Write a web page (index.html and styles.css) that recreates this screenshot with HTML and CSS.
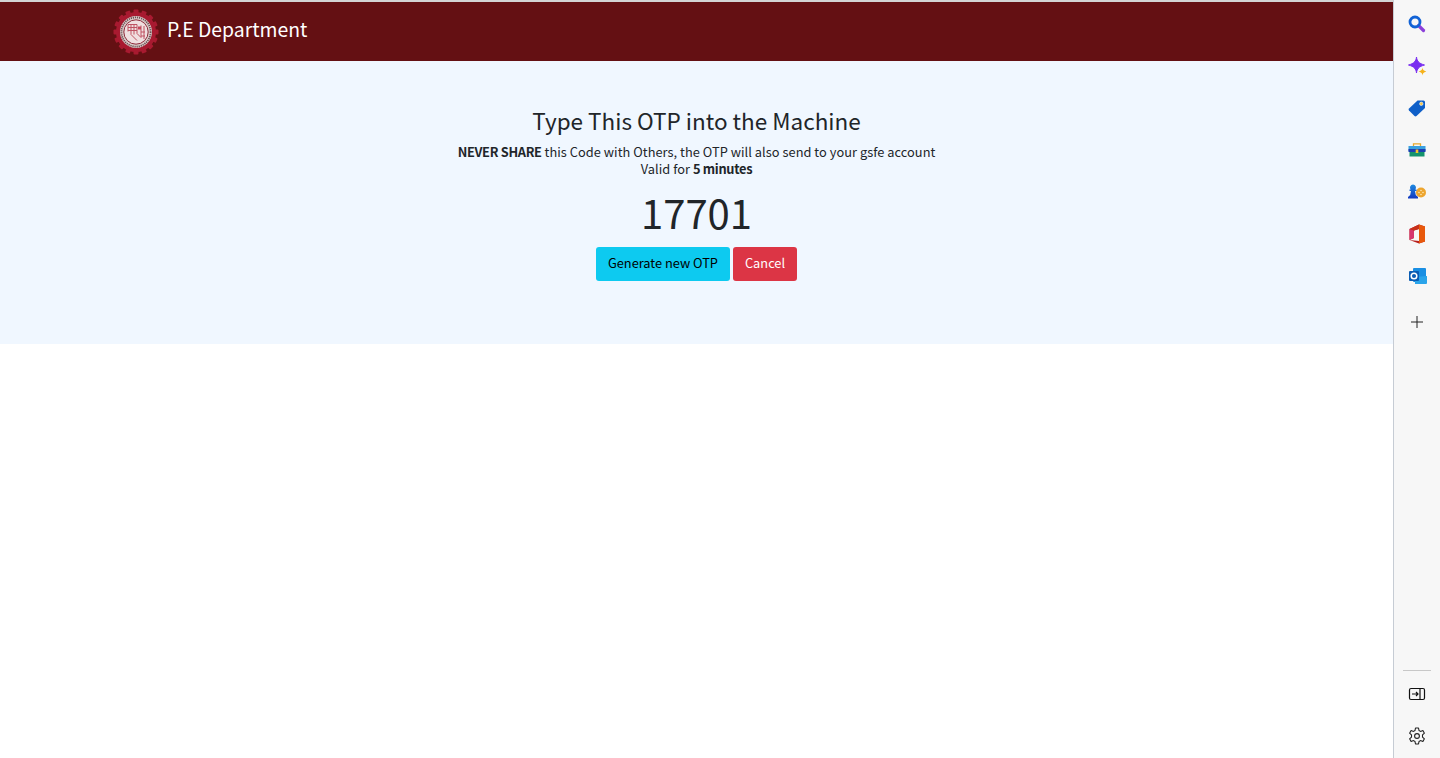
FILE: index.html
```html
<!DOCTYPE html>
<html lang="en">
<head>
<meta charset="utf-8">
<title>P.E Department</title>
<link rel="stylesheet" href="styles.css">
</head>
<body>
<div class="page">
  <main class="main">
    <header class="navbar">
      <svg class="logo" viewBox="0 0 46 46" aria-hidden="true">
        <g fill="#a81a30">
          <circle cx="23" cy="23" r="20"/>
          <rect x="20.500" y="0.500" width="5" height="45" rx="1"/>
          <rect x="20.500" y="0.500" width="5" height="45" rx="1" transform="rotate(22.500 23 23)"/>
          <rect x="20.500" y="0.500" width="5" height="45" rx="1" transform="rotate(45 23 23)"/>
          <rect x="20.500" y="0.500" width="5" height="45" rx="1" transform="rotate(67.500 23 23)"/>
          <rect x="20.500" y="0.500" width="5" height="45" rx="1" transform="rotate(90 23 23)"/>
          <rect x="20.500" y="0.500" width="5" height="45" rx="1" transform="rotate(112.500 23 23)"/>
          <rect x="20.500" y="0.500" width="5" height="45" rx="1" transform="rotate(135 23 23)"/>
          <rect x="20.500" y="0.500" width="5" height="45" rx="1" transform="rotate(157.500 23 23)"/>
        </g>
        <circle cx="23" cy="23" r="16" fill="#d9cdca"/>
        <circle cx="23" cy="23" r="14.600" fill="none" stroke="#6f5054" stroke-width="1.800" stroke-dasharray="1.200 .9"/>
        <circle cx="23" cy="23" r="12.200" fill="#f0dfe0" stroke="#8d2a3a" stroke-width="1"/>
        <path d="M15 15.500h9v9l4 4v-12M15 18.500h9M15 21.500h9M18 15.500v10l6 6M21 15.500v10M28 23h4M28 27h4M31 17v13M15 15.500v7" fill="none" stroke="#bf5363" stroke-width="1"/>
        <path d="M25 17.500h3v3h-3z" fill="#c4495c"/>
      </svg>
      <span class="brand">P.E Department</span>
    </header>
    <section class="hero">
      <h3 class="title">Type This OTP into the Machine</h3>
      <p class="note"><strong>NEVER SHARE</strong> this Code with Others, the OTP will also send to your gsfe account<br>Valid for <strong>5 minutes</strong></p>
      <div class="code">17701</div>
      <div class="actions">
        <button class="btn btn-info">Generate new OTP</button>
        <button class="btn btn-danger">Cancel</button>
      </div>
    </section>
  </main>
  <aside class="sidebar">
    <div class="side-top">
      <span class="side-item"><svg viewBox="0 0 20 20" width="20" height="20"><path d="M11.500 11.500l5 5" stroke="#8b3fd9" stroke-width="3.200" stroke-linecap="round"/><circle cx="8" cy="8" r="5" fill="none" stroke="#1263d6" stroke-width="2.800"/></svg></span>
      <span class="side-item"><svg viewBox="0 0 20 20" width="20" height="20"><path d="M9.500 1c.5 4.300 2.500 6.500 8 8-5.500 1.500-7.500 3.700-8 8-.5-4.300-2.500-6.500-8-8 5.500-1.500 7.500-3.700 8-8z" fill="#7a2ff0" stroke="#7a2ff0" stroke-width="1" stroke-linejoin="round"/><path d="M15.500 11.500c.3 2.200 1 3 3.800 4-2.800 1-3.500 1.800-3.800 4-.3-2.200-1-3-3.800-4 2.800-1 3.500-1.800 3.800-4z" fill="#f6b21b"/></svg></span>
      <span class="side-item"><svg viewBox="0 0 20 20" width="20" height="20"><path d="M10.500 2.500h6a1.500 1.500 0 0 1 1.500 1.500v6L9.500 18a1.500 1.500 0 0 1-2 0L2 12.500a1.500 1.500 0 0 1 0-2z" fill="#0f5fc8"/><circle cx="14.300" cy="5.800" r="1.700" fill="#f6c544" stroke="#fff" stroke-width=".6"/></svg></span>
      <span class="side-item"><svg viewBox="0 0 20 20" width="20" height="20"><path d="M6.500 6V3.800h7V6" fill="none" stroke="#e9a82c" stroke-width="1.300"/><rect x="1.500" y="6" width="17" height="5" fill="#3aa0de"/><rect x="1.500" y="9" width="17" height="3" fill="#1c3fb0"/><rect x="2.500" y="12" width="15" height="4.500" fill="#14936d"/><rect x="8.700" y="9.500" width="2.600" height="3.500" fill="#f6c22b"/></svg></span>
      <span class="side-item"><svg viewBox="0 0 20 20" width="20" height="20"><defs><linearGradient id="pawn" x1="0" y1="0" x2="0" y2="1"><stop offset="0" stop-color="#1f8be0"/><stop offset="1" stop-color="#1238c0"/></linearGradient></defs><circle cx="14" cy="10.500" r="5" fill="#eda52f"/><path d="M6 2.500a3 3 0 0 1 2.300 4.900H9.500v1.600H8l.8 4 2.200 2V16.500H1V15l2.200-2L4 9H2.500V7.400h1.200A3 3 0 0 1 6 2.500z" fill="url(#pawn)"/><g fill="#fbe6b4"><circle cx="14" cy="8.500" r=".8"/><circle cx="12" cy="10.500" r=".8"/><circle cx="16" cy="10.500" r=".8"/><circle cx="14" cy="12.500" r=".8"/></g></svg></span>
      <span class="side-item"><svg viewBox="0 0 20 20" width="20" height="20"><path d="M12 .5l6 2v15l-6 2-9.500-3.500 9.500 1V5L7 6.500V14l-4.500 2V5z" fill="#b8201f"/><path d="M2.500 5L7 6.500V14l-4.500 2z" fill="#d6366f"/><path d="M12 .5l6 2v15l-6 2z" fill="#e8590c"/><path d="M12 .5L2.500 5 7 6.500 12 5z" fill="#c8301a"/></svg></span>
      <span class="side-item"><svg viewBox="0 0 20 20" width="20" height="20"><rect x="6" y="2" width="13" height="14" rx="1" fill="#1a8fe3"/><path d="M8 11l12-1v7a1 1 0 0 1-1 1H8z" fill="#2aa4ea"/><rect x="2" y="5" width="10" height="10" rx="1" fill="#0a5cb3"/><circle cx="7" cy="10" r="2.800" fill="none" stroke="#fff" stroke-width="1.500"/></svg></span>
      <span class="side-item side-add"><svg viewBox="0 0 20 20" width="20" height="20"><path d="M10 4v12M4 10h12" stroke="#222" stroke-width="1" fill="none"/></svg></span>
    </div>
    <div class="side-bottom">
      <hr class="side-rule">
      <span class="side-item"><svg viewBox="0 0 20 20" width="20" height="20"><rect x="2.500" y="4.500" width="15" height="11" rx="1.500" fill="none" stroke="#111" stroke-width="1.200"/><path d="M13 4.500v11" stroke="#111" stroke-width="1.200"/><path d="M5 10h6M9 8l2 2-2 2" fill="none" stroke="#111" stroke-width="1.200"/></svg></span>
      <span class="side-item"><svg viewBox="0 0 20 20" width="20" height="20"><path d="M8.500 2h3l.5 2.500 1.500.9 2.400-.8 1.500 2.600-1.900 1.700v2.200l1.900 1.700-1.500 2.600-2.400-.8-1.500.9-.5 2.500h-3l-.5-2.500-1.500-.9-2.400.8-1.500-2.600 1.900-1.700V8.900L2.600 7.200l1.500-2.600 2.400.8L8 4.500z" fill="none" stroke="#222" stroke-width="1.100" stroke-linejoin="round"/><circle cx="10" cy="10" r="2.400" fill="none" stroke="#222" stroke-width="1.100"/></svg></span>
    </div>
  </aside>
</div>
</body>
</html>
```
FILE: styles.css
```css
* { box-sizing: border-box; }
html, body { margin: 0; height: 100%; }
body {
  font-family: "Noto Sans CJK SC", "Noto Sans", sans-serif;
  color: #212529;
  background: #fff;
  overflow: hidden;
}
.page { display: flex; height: 758px; }
.main { flex: 1; min-width: 0; border-top: 2px solid #d4d4d4; }
.navbar {
  display: flex;
  align-items: center;
  gap: 8px;
  height: 59px;
  padding-left: 113px;
  background: #641013;
}
.logo { width: 46px; height: 46px; flex: none; }
.brand { font-size: 19.400px; line-height: 30px; color: #fff; margin-bottom: 6px; }
.hero {
  height: 283px;
  padding-top: 44px;
  background: #f0f7ff;
  text-align: center;
}
.title { margin: 0 0 8px; font-size: 22.500px; font-weight: 400; line-height: 30px; }
.note { margin: 0 0 10px; font-size: 12.800px; line-height: 17px; letter-spacing: .04px; }
.note strong { font-weight: 700; letter-spacing: -.3px; }
.code { font-size: 40px; line-height: 50px; margin-bottom: 10px; }
.actions { display: flex; justify-content: center; gap: 3px; }
.btn {
  height: 34px;
  padding: 0 12px 2px;
  border: 0;
  border-radius: 3px;
  font: inherit;
  font-size: 12.800px;
  line-height: 32px;
}
.btn-info { background: #0dcaf0; color: #000; }
.btn-danger { background: #dc3545; color: #fff; }
.sidebar {
  flex: none;
  width: 47px;
  display: flex;
  flex-direction: column;
  justify-content: space-between;
  background: #f7f7f7;
  border-left: 1px solid #c6ccd4;
}
.side-top, .side-bottom { display: flex; flex-direction: column; align-items: center; }
.side-top { padding-top: 3px; }
.side-bottom { padding-bottom: 1px; }
.side-item { display: flex; align-items: center; justify-content: center; width: 46px; height: 42px; }
.side-add { margin-top: 4px; }
.side-rule { width: 28px; margin: 0 0 2px; border: 0; border-top: 1px solid #c8c8c8; }
```
